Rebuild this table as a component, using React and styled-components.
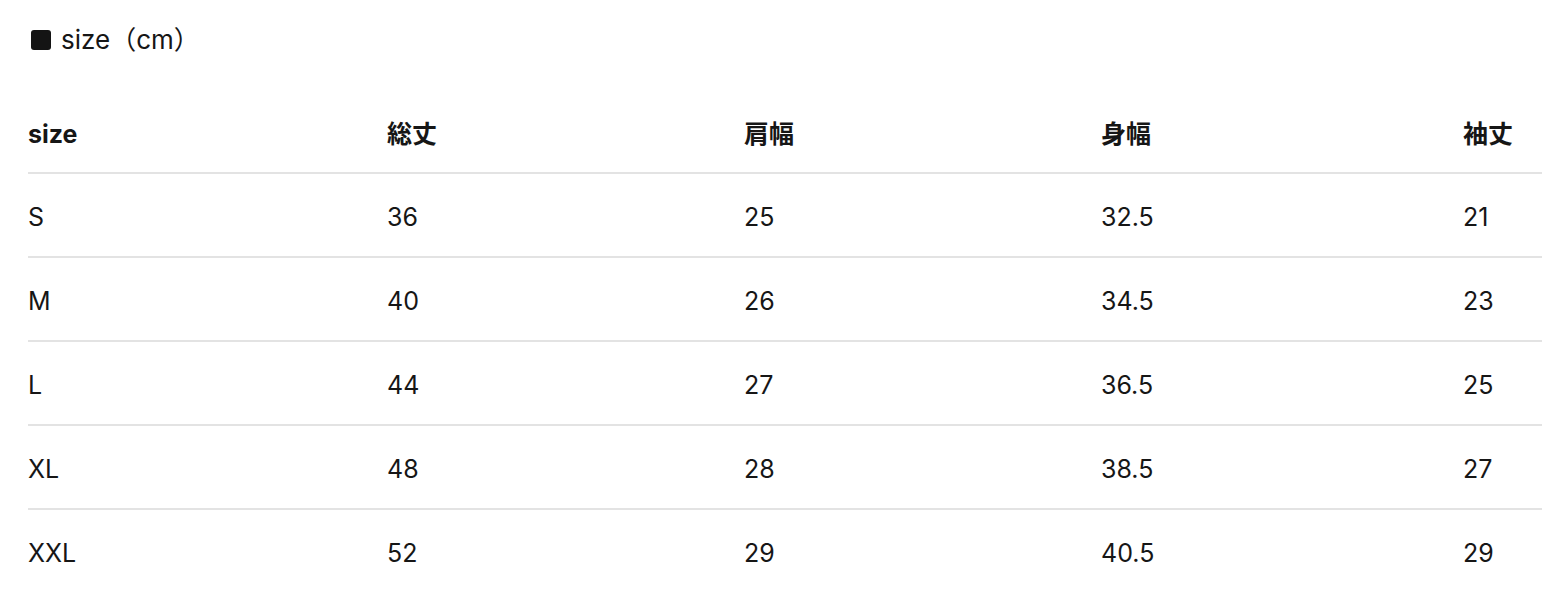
import React from "react";
import styled, { createGlobalStyle } from "styled-components";

const GlobalStyle = createGlobalStyle`
  html, body {
    margin: 0;
    padding: 0;
    background: #ffffff;
  }
  body {
    font-family: "Inter", "Noto Sans CJK JP", sans-serif;
    color: #161616;
  }
`;

const Page = styled.div`
  padding: 22px 0 0 28px;
`;

const Title = styled.h2`
  margin: 0;
  font-size: 26px;
  font-weight: 400;
  line-height: 36px;
  color: #161616;
  display: flex;
  align-items: center;
`;

const Square = styled.span`
  display: inline-block;
  width: 20px;
  height: 20px;
  border-radius: 3px;
  background: #141414;
  margin: 0 10px 0 3px;
`;

const Table = styled.div`
  margin-top: 37px;
  display: flex;
  flex-direction: column;
`;

const Row = styled.div`
  display: grid;
  grid-template-columns: 359px 357px 357px 362px 1fr;
  align-items: center;
  height: ${(p) => (p.$header ? "77px" : "78px")};
  padding-top: ${(p) => (p.$header ? "0" : "4px")};
  box-sizing: content-box;
  border-bottom: ${(p) => (p.$last ? "none" : "2px solid #e3e3e3")};
`;

const Cell = styled.div`
  font-size: 25px;
  line-height: 36px;
  font-weight: ${(p) => (p.$head ? 700 : 400)};
  color: #161616;
  white-space: nowrap;
`;

const headers = ["size", "総丈", "肩幅", "身幅", "袖丈"];
const rows = [
  ["S", "36", "25", "32.5", "21"],
  ["M", "40", "26", "34.5", "23"],
  ["L", "44", "27", "36.5", "25"],
  ["XL", "48", "28", "38.5", "27"],
  ["XXL", "52", "29", "40.5", "29"],
];

export default function App() {
  return (
    <>
      <GlobalStyle />
      <Page>
        <Title>
          <Square aria-hidden="true" />
          size（cm）
        </Title>
        <Table>
          <Row $header>
            {headers.map((h) => (
              <Cell key={h} $head>
                {h}
              </Cell>
            ))}
          </Row>
          {rows.map((r, i) => (
            <Row key={r[0]} $last={i === rows.length - 1}>
              {r.map((c, j) => (
                <Cell key={j}>{c}</Cell>
              ))}
            </Row>
          ))}
        </Table>
      </Page>
    </>
  );
}
